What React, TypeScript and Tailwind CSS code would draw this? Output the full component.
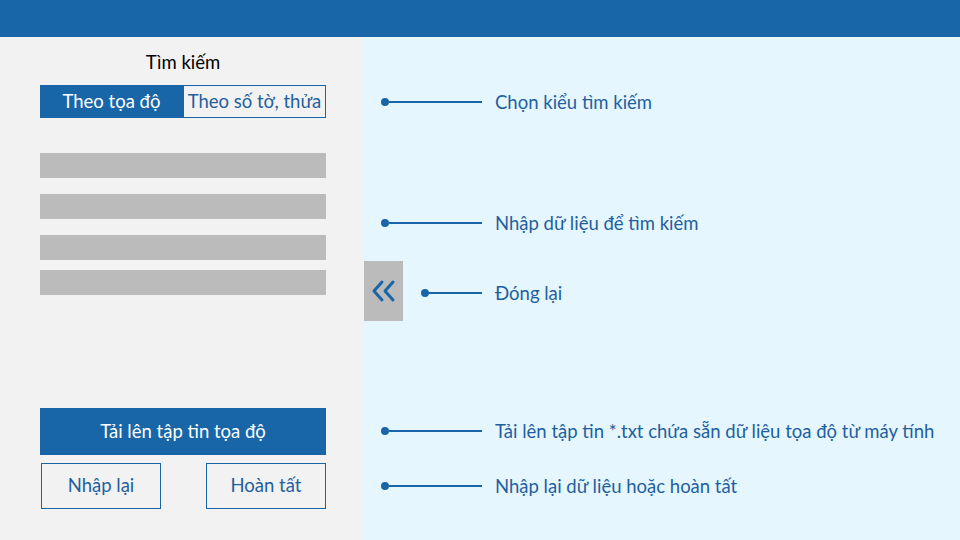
import React from 'react';

const BLUE = 'bg-[#1866a8]';

const Callout = ({ text, lineClass = 'w-[93px]' }: { text: string; lineClass?: string }) => (
  <div className="flex items-center">
    <span className="w-[8px] h-[8px] rounded-full bg-[#1866a8]" />
    <span className={`${lineClass} h-[2px] bg-[#1866a8]`} />
    <span className="ml-[13px] text-[18.5px] leading-[24px] text-[#1f5f9e] whitespace-nowrap">{text}</span>
  </div>
);

export default function App() {
  return (
    <div className="w-[960px] h-[540px] flex flex-col overflow-hidden" style={{ fontFamily: 'Lato, "Noto Sans", sans-serif' }}>
      {/* top bar */}
      <div className={`h-[37px] ${BLUE}`} />

      <div className="flex flex-1">
        {/* search panel */}
        <div className="w-[364px] bg-[#f2f2f2] flex flex-col pl-[40px] pr-[38px]">
          <div className="mt-[13px] h-[24px] text-center text-[18.5px] leading-[24px] text-black">Tìm kiếm</div>

          <div className="mt-[11px] flex h-[33px]">
            <button className="w-[143px] bg-[#1866a8] text-white text-[18.5px]">Theo tọa độ</button>
            <button className="flex-1 border border-[#1866a8] text-[#1f5f9e] text-[18.5px] whitespace-nowrap">Theo số tờ, thửa</button>
          </div>

          <div className="mt-[35px] h-[25px] bg-[#bbbbbb]" />
          <div className="mt-[16px] h-[25px] bg-[#bbbbbb]" />
          <div className="mt-[16px] h-[25px] bg-[#bbbbbb]" />
          <div className="mt-[10px] h-[25px] bg-[#bbbbbb]" />

          <button className="mt-[113px] h-[47px] bg-[#1866a8] text-white text-[18.5px]">Tải lên tập tin tọa độ</button>

          <div className="mt-[8px] flex justify-between">
            <button className="ml-px w-[120px] h-[46px] border-[1.5px] border-[#1866a8] text-[#1f5f9e] text-[18.5px]">Nhập lại</button>
            <button className="w-[120px] h-[46px] border-[1.5px] border-[#1866a8] text-[#1f5f9e] text-[18.5px]">Hoàn tất</button>
          </div>
        </div>

        {/* annotations */}
        <div className="flex-1 bg-[#e5f6fe] flex flex-col">
          <div className="mt-[53px] pl-[17px]">
            <Callout text="Chọn kiểu tìm kiếm" />
          </div>
          <div className="mt-[97px] pl-[17px]">
            <Callout text="Nhập dữ liệu để tìm kiếm" />
          </div>
          <div className="mt-[26px] flex items-center">
            <button className="w-[39px] h-[60px] bg-[#bbbbbb] flex items-center justify-center">
              <svg width="26" height="24" viewBox="0 0 26 24" fill="none" stroke="#1866a8" strokeWidth="3" strokeLinecap="round" strokeLinejoin="round">
                <path d="M11 3 L3 12 L11 21" />
                <path d="M22 3 L14 12 L22 21" />
              </svg>
            </button>
            <div className="ml-[18px] mt-[4px]">
              <Callout text="Đóng lại" lineClass="w-[53px]" />
            </div>
          </div>
          <div className="mt-[98px] pl-[17px]">
            <Callout text="Tải lên tập tin *.txt chứa sẵn dữ liệu tọa độ từ máy tính" />
          </div>
          <div className="mt-[31px] pl-[17px]">
            <Callout text="Nhập lại dữ liệu hoặc hoàn tất" />
          </div>
        </div>
      </div>
    </div>
  );
}
